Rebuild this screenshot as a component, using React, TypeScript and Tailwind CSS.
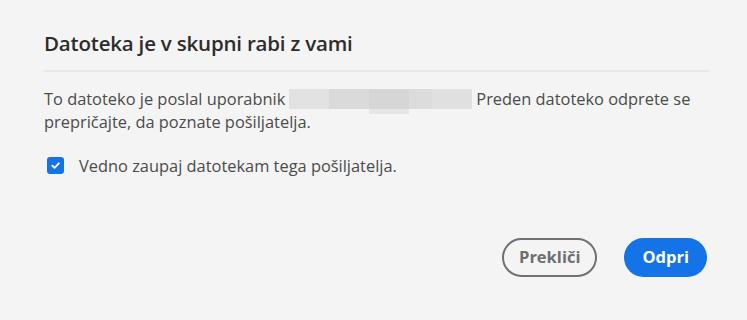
export default function App() {
  return (
    <div className="w-[747px] h-[320px] bg-[#f4f4f4] text-[#4b4b4b] font-['Open_Sans',sans-serif]">
      <div className="flex h-full flex-col pl-[44px] pr-[40px] pt-[29px] pb-[43px]">
        <h1 className="text-[20.5px] leading-[28px] font-semibold text-[#2c2c2c] tracking-[-0.2px]">
          Datoteka je v skupni rabi z vami
        </h1>
        <div className="mt-[13px] h-[2px] w-[665px] bg-[#e8e8e8]" />

        <p className="mt-[15px] w-[665px] text-[16.4px] leading-[23px] text-[#4b4b4b]">
          To datoteko je poslal uporabnik
          <span className="relative mx-[4px] inline-block h-[20px] w-[183px] align-[-4px]">
            <span className="flex h-full w-full">
              <span className="w-[40px] bg-[#e2e2e2]" />
              <span className="w-[40px] bg-[#dadada]" />
              <span className="w-[40px] bg-[#d6d6d6]" />
              <span className="w-[23px] bg-[#dcdcdc]" />
              <span className="w-[40px] bg-[#e0e0e0]" />
            </span>
            <span className="absolute left-[80px] top-[20px] h-[5px] w-[40px] bg-[#e6e6e6]" />
          </span>
          Preden datoteko odprete se prepričajte, da poznate pošiljatelja.
        </p>

        <label className="mt-[21px] flex items-center gap-[15px]">
          <span className="ml-[3px] flex h-[17px] w-[17px] items-center justify-center rounded-[3px] bg-[#1473e6]">
            <svg viewBox="0 0 12 12" className="h-[11px] w-[11px]">
              <path d="M2.5 6.2 L5 8.6 L9.6 3.6" fill="none" stroke="white" strokeWidth="2" strokeLinecap="round" strokeLinejoin="round" />
            </svg>
          </span>
          <span className="text-[16.4px] leading-[23px] text-[#4b4b4b]">Vedno zaupaj datotekam tega pošiljatelja.</span>
        </label>

        <div className="mt-auto flex justify-end gap-[27px]">
          <button className="ml-[3px] h-[39px] rounded-full border-2 border-[#707070] px-[15px] text-[16.5px] font-bold text-[#6e6e6e]">
            Prekliči
          </button>
          <button className="h-[39px] rounded-full bg-[#1473e6] px-[18px] text-[16.5px] font-bold text-white">
            Odpri
          </button>
        </div>
      </div>
    </div>
  );
}
